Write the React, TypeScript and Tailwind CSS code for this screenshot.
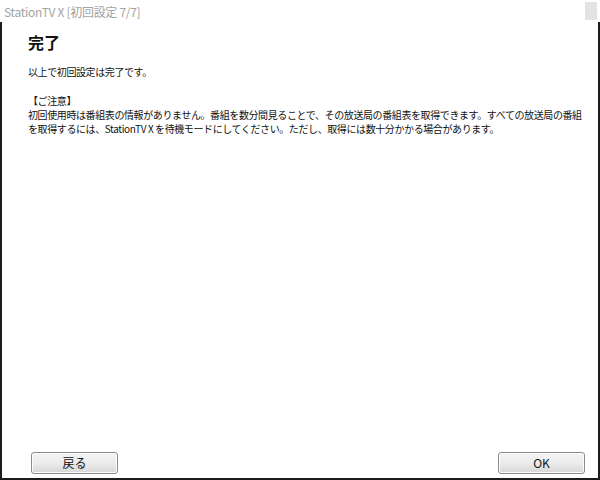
import React from "react";

const jp = { fontFamily: '"Noto Sans CJK JP", "Noto Sans", sans-serif' };

function Btn({ children }: { children: React.ReactNode }) {
  return (
    <button
      className="w-[87px] h-[22px] rounded-[3px] border border-[#8c8c8c] bg-gradient-to-b from-[#f4f4f4] via-[#ececec] to-[#d6d6d6] text-[12px] leading-none text-[#111] flex items-center justify-center shadow-[inset_0_0_0_1px_#fcfcfc]"
      style={jp}
    >
      {children}
    </button>
  );
}

export default function App() {
  return (
    <div className="w-[600px] h-[480px] bg-white flex flex-col relative" style={jp}>
      <div className="absolute top-[2px] right-[3px] w-[12px] h-[18px] bg-[#e3e3e3]" />
      <div className="h-[22px] pl-[4px] pt-[4px] text-[12px] leading-[16px] text-[#a3a3a3] tracking-[-0.3px]">
        StationTV X [初回設定 7/7]
      </div>
      <div className="flex-1 flex flex-col border-l-2 border-r-2 border-b-2 border-[#1c1c1c]">
        <div className="pl-[26px] text-[#111]">
          <div className="mt-[10px] text-[16px] leading-[20px] font-bold">完了</div>
          <div className="mt-[13px] text-[10px] leading-[13px] tracking-[-0.4px]">以上で初回設定は完了です。</div>
          <div className="mt-[16px] text-[10px] leading-[14px] tracking-[-0.4px] whitespace-nowrap">
            <div>【ご注意】</div>
            <div>初回使用時は番組表の情報がありません。番組を数分間見ることで、その放送局の番組表を取得できます。すべての放送局の番組</div>
            <div>を取得するには、StationTV X を待機モードにしてください。ただし、取得には数十分かかる場合があります。</div>
          </div>
        </div>
        <div className="flex-1" />
        <div className="flex justify-between pl-[29px] pr-[13px] pb-[4px]">
          <Btn>戻る</Btn>
          <Btn>OK</Btn>
        </div>
      </div>
    </div>
  );
}
